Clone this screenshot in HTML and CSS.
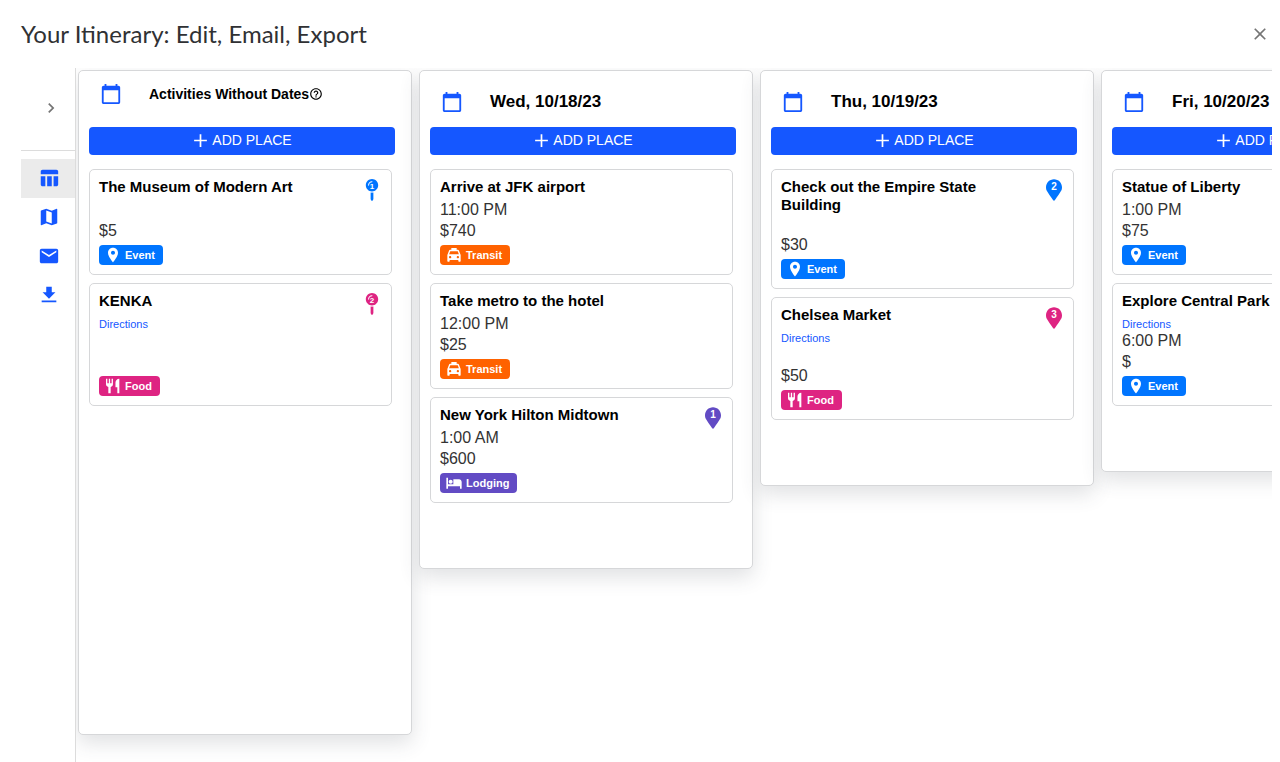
FILE: index.html
```html
<!DOCTYPE html>
<html lang="en">
<head>
<meta charset="utf-8">
<title>Your Itinerary</title>
<link rel="stylesheet" href="styles.css">
</head>
<body>
<svg class="sprite" aria-hidden="true">
  <symbol id="calendar" viewBox="0 0 24 24"><path d="M20 3h-1V1h-2v2H7V1H5v2H4c-1.1 0-2 .9-2 2v16c0 1.1.9 2 2 2h16c1.1 0 2-.9 2-2V5c0-1.1-.9-2-2-2zm0 18H4V8h16v13z"/></symbol>
  <symbol id="plus" viewBox="0 0 24 24"><path d="M21 13.200h-7.800V21h-2.400v-7.800H3v-2.400h7.800V3h2.400v7.800H21z"/></symbol>
  <symbol id="place" viewBox="0 0 24 24"><path d="M12 1C7.600 1 4.500 4.300 4.500 8.500 4.500 14.500 12 23 12 23s7.500-8.500 7.500-14.500C19.500 4.300 16.400 1 12 1zm0 10.500c-1.700 0-3-1.300-3-3s1.300-3 3-3 3 1.300 3 3-1.300 3-3 3z"/></symbol>
  <symbol id="taxi" viewBox="0 0 24 24"><path d="M19.500 5.500C19.200 4.600 18.600 4 17.800 4H16V1.500H8V4H6.200c-.8 0-1.400.6-1.700 1.500L2 12v9c0 .6.400 1 1 1h1.500c.6 0 1-.4 1-1v-1.500h13V21c0 .6.400 1 1 1H21c.6 0 1-.4 1-1v-9zM6.200 17c-.9 0-1.700-.8-1.700-1.700s.8-1.700 1.700-1.700 1.700.8 1.700 1.700S7.100 17 6.200 17zm11.600 0c-.9 0-1.700-.8-1.700-1.700s.8-1.700 1.700-1.700 1.700.8 1.700 1.700-.8 1.700-1.700 1.700zM4.700 11l1.700-4.800h11.200l1.700 4.800z"/></symbol>
  <symbol id="food" viewBox="0 0 24 24"><path d="M1.500 1h2v7h2.200V1h2v7h2.200V1h2v8.500c0 2.300-1.400 3.600-3.400 4V23H5v-9.500c-2-.4-3.500-1.700-3.500-4zM21.500 1v22h-3v-9h-2.800V7c0-3.500 2.300-6 5.800-6z"/></symbol>
  <symbol id="bed" viewBox="0 0 24 24"><path d="M7 13c1.660 0 3-1.340 3-3S8.660 7 7 7s-3 1.340-3 3 1.340 3 3 3zm12.500-6.500H11V14H3V4H.5v16.500H3V17h18v3.500h2.500V10.500c0-2.200-1.800-4-4-4z"/></symbol>
  <symbol id="marker" viewBox="0 0 384 512"><path d="M172.270 501.670C26.970 291.030 0 269.410 0 192 0 85.960 85.960 0 192 0s192 85.960 192 192c0 77.410-26.970 99.030-172.270 309.670-9.530 13.770-29.930 13.770-39.460 0z"/></symbol>
  <symbol id="map-pin" viewBox="0 0 288 512"><path d="M112 316.940v156.690l22.020 33.020c4.750 7.120 15.220 7.120 19.970 0L176 473.630V316.940c-10.390 1.920-21.060 3.060-32 3.060s-21.610-1.140-32-3.060zM144 0C64.470 0 0 64.470 0 144s64.470 144 144 144 144-64.470 144-144S223.530 0 144 0zm0 76c-37.500 0-68 30.500-68 68 0 6.620-5.380 12-12 12s-12-5.380-12-12c0-50.730 41.280-92 92-92 6.620 0 12 5.380 12 12s-5.380 12-12 12z"/></symbol>
</svg>

<header class="page-header">
  <h1>Your Itinerary: Edit, Email, Export</h1>
  <button class="icon-button" aria-label="Close"><svg viewBox="0 0 24 24" width="20" height="20"><path d="M19 6.410L17.590 5 12 10.590 6.410 5 5 6.410 10.590 12 5 17.590 6.410 19 12 13.410 17.590 19 19 17.590 13.410 12z"/></svg></button>
</header>

<div class="workspace">
  <nav class="sidebar" aria-label="Views">
    <div class="sidebar-top">
      <button class="icon-button" aria-label="Expand menu"><svg viewBox="0 0 24 24" width="20" height="20"><path d="M10 6L8.590 7.410 13.170 12l-4.580 4.590L10 18l6-6z"/></svg></button>
    </div>
    <div class="views">
      <button class="view selected" aria-label="Board"><svg viewBox="0 0 24 24"><path d="M10 10.020h5V21h-5zM17 21h3c1.100 0 2-.9 2-2v-9h-5v11zm3-18H5c-1.100 0-2 .9-2 2v3h19V5c0-1.100-.9-2-2-2zM3 19c0 1.100.9 2 2 2h3V10H3v9z"/></svg></button>
      <button class="view" aria-label="Map"><svg viewBox="0 0 24 24"><path d="M20.500 3l-.16.03L15 5.100 9 3 3.360 4.900c-.21.07-.36.25-.36.48V20.500c0 .28.22.5.5.5l.16-.03L9 18.900l6 2.100 5.640-1.900c.21-.07.36-.25.36-.48V3.500c0-.28-.22-.5-.5-.5zM15 19l-6-2.110V5l6 2.110V19z"/></svg></button>
      <button class="view" aria-label="Email"><svg viewBox="0 0 24 24"><path d="M20 4H4c-1.100 0-1.990.9-1.990 2L2 18c0 1.100.9 2 2 2h16c1.100 0 2-.9 2-2V6c0-1.100-.9-2-2-2zm0 4l-8 5-8-5V6l8 5 8-5v2z"/></svg></button>
      <button class="view" aria-label="Download"><svg viewBox="0 0 24 24"><path d="M19 9h-4V3H9v6H5l7 7 7-7zM4 18v2h16v-2H4z"/></svg></button>
    </div>
  </nav>

  <main class="board">
    <section class="column undated">
      <div class="column-header">
        <svg class="calendar"><use href="#calendar"/></svg>
        <h2>Activities Without Dates</h2>
        <svg class="help" viewBox="0 0 24 24"><path d="M11 18h2v-2h-2v2zm1-16C6.480 2 2 6.480 2 12s4.480 10 10 10 10-4.480 10-10S17.520 2 12 2zm0 18c-4.410 0-8-3.590-8-8s3.590-8 8-8 8 3.590 8 8-3.590 8-8 8zm0-14c-2.210 0-4 1.790-4 4h2c0-1.100.9-2 2-2s2 .9 2 2c0 2-3 1.750-3 5h2c0-2.250 3-2.500 3-5 0-2.210-1.790-4-4-4z"/></svg>
      </div>
      <button class="add"><svg><use href="#plus"/></svg>ADD PLACE</button>
      <div class="cards">
        <article class="card">
          <div class="card-body">
            <h3>The Museum of Modern Art</h3>
            <p></p>
            <p>$5</p>
            <span class="badge event"><svg><use href="#place"/></svg>Event</span>
          </div>
          <span class="pin thin event"><svg><use href="#map-pin"/></svg><b>1</b></span>
        </article>
        <article class="card">
          <div class="card-body">
            <h3>KENKA</h3>
            <a href="#">Directions</a>
            <p></p>
            <p></p>
            <span class="badge food"><svg><use href="#food"/></svg>Food</span>
          </div>
          <span class="pin thin food"><svg><use href="#map-pin"/></svg><b>2</b></span>
        </article>
      </div>
    </section>

    <section class="column">
      <div class="column-header">
        <svg class="calendar"><use href="#calendar"/></svg>
        <h2>Wed, 10/18/23</h2>
      </div>
      <button class="add"><svg><use href="#plus"/></svg>ADD PLACE</button>
      <div class="cards">
        <article class="card">
          <div class="card-body">
            <h3>Arrive at JFK airport</h3>
            <p>11:00 PM</p>
            <p>$740</p>
            <span class="badge transit"><svg><use href="#taxi"/></svg>Transit</span>
          </div>
        </article>
        <article class="card">
          <div class="card-body">
            <h3>Take metro to the hotel</h3>
            <p>12:00 PM</p>
            <p>$25</p>
            <span class="badge transit"><svg><use href="#taxi"/></svg>Transit</span>
          </div>
        </article>
        <article class="card">
          <div class="card-body">
            <h3>New York Hilton Midtown</h3>
            <p>1:00 AM</p>
            <p>$600</p>
            <span class="badge lodging"><svg><use href="#bed"/></svg>Lodging</span>
          </div>
          <span class="pin lodging"><svg><use href="#marker"/></svg><b>1</b></span>
        </article>
      </div>
    </section>

    <section class="column">
      <div class="column-header">
        <svg class="calendar"><use href="#calendar"/></svg>
        <h2>Thu, 10/19/23</h2>
      </div>
      <button class="add"><svg><use href="#plus"/></svg>ADD PLACE</button>
      <div class="cards">
        <article class="card">
          <div class="card-body">
            <h3>Check out the Empire State Building</h3>
            <p></p>
            <p>$30</p>
            <span class="badge event"><svg><use href="#place"/></svg>Event</span>
          </div>
          <span class="pin event"><svg><use href="#marker"/></svg><b>2</b></span>
        </article>
        <article class="card">
          <div class="card-body">
            <h3>Chelsea Market</h3>
            <a href="#">Directions</a>
            <p></p>
            <p>$50</p>
            <span class="badge food"><svg><use href="#food"/></svg>Food</span>
          </div>
          <span class="pin food"><svg><use href="#marker"/></svg><b>3</b></span>
        </article>
      </div>
    </section>

    <section class="column">
      <div class="column-header">
        <svg class="calendar"><use href="#calendar"/></svg>
        <h2>Fri, 10/20/23</h2>
      </div>
      <button class="add"><svg><use href="#plus"/></svg>ADD PLACE</button>
      <div class="cards">
        <article class="card">
          <div class="card-body">
            <h3>Statue of Liberty</h3>
            <p>1:00 PM</p>
            <p>$75</p>
            <span class="badge event"><svg><use href="#place"/></svg>Event</span>
          </div>
        </article>
        <article class="card">
          <div class="card-body">
            <h3>Explore Central Park</h3>
            <a href="#">Directions</a>
            <p>6:00 PM</p>
            <p>$</p>
            <span class="badge event"><svg><use href="#place"/></svg>Event</span>
          </div>
        </article>
      </div>
    </section>
  </main>
</div>
</body>
</html>
```
FILE: styles.css
```css
* { box-sizing: border-box; }

body {
  margin: 0;
  height: 100vh;
  padding: 0 8px 0 21px;
  display: flex;
  flex-direction: column;
  overflow: hidden;
  background: #fff;
  color: #000;
  font-family: "Liberation Sans", Arial, sans-serif;
}

h1, h2, h3, p { margin: 0; }
button { font: inherit; border: 0; padding: 0; cursor: pointer; }
svg { fill: currentColor; flex: none; }
.sprite { display: none; }

.page-header {
  flex: none;
  height: 68px;
  padding-right: 2px;
  display: flex;
  align-items: center;
  justify-content: space-between;
}
h1 {
  font: 400 24px/32px Lato, sans-serif;
  color: #303134;
}
.icon-button {
  display: flex;
  background: none;
  color: #757575;
}

.workspace {
  flex: 1;
  min-height: 0;
  display: flex;
}

.sidebar {
  flex: none;
  width: 55px;
  border-right: 1px solid #dcdcdc;
}
.sidebar-top {
  height: 83px;
  padding: 0 0 2px 6px;
  display: flex;
  align-items: center;
  justify-content: center;
  border-bottom: 1px solid #dcdcdc;
}
.views {
  padding-top: 8px;
  display: flex;
  flex-direction: column;
}
.view {
  height: 39px;
  padding: 0 0 2px 2px;
  display: flex;
  align-items: center;
  justify-content: center;
  background: none;
  color: #1557ff;
}
.view.selected { background: #ebebeb; }
.view svg { width: 22px; height: 22px; }

.board {
  flex: 1;
  min-width: 0;
  padding: 2px 0 27px 2px;
  display: flex;
  align-items: flex-start;
  gap: 7px;
  overflow: hidden;
}
.column {
  flex: none;
  width: 334px;
  padding: 0 16px 65px 10px;
  border: 1px solid #d6d7d9;
  border-radius: 5px;
  background: #fff;
  box-shadow: 0 8px 20px rgba(60, 66, 82, 0.16);
}
.undated { align-self: stretch; }

.column-header {
  height: 56px;
  padding: 6px 0 0 11px;
  display: flex;
  align-items: center;
}
.undated .column-header { padding-bottom: 16px; }
.calendar {
  width: 22px;
  height: 22px;
  margin-right: 27px;
  color: #1557ff;
}
h2 { font-size: 17px; line-height: 24px; }
.undated h2 { font-size: 14px; }
.help { width: 14px; height: 14px; }

.add {
  width: 100%;
  height: 28px;
  padding-bottom: 2px;
  display: flex;
  align-items: center;
  justify-content: center;
  gap: 3px;
  border-radius: 4px;
  background: #1557ff;
  color: #fff;
  font-size: 14px;
}
.add svg { width: 17px; height: 17px; }

.cards {
  padding: 14px 3px 0 0;
  display: flex;
  flex-direction: column;
  gap: 8px;
}
.card {
  padding: 8px 11px 9px 9px;
  display: flex;
  justify-content: space-between;
  border: 1px solid #d6d7d9;
  border-radius: 5px;
}
.card-body {
  width: 220px;
  display: flex;
  flex-direction: column;
  align-items: flex-start;
}
h3 {
  min-height: 22px;
  font-size: 15px;
  line-height: 18px;
}
.card p {
  height: 20px;
  margin-bottom: 1px;
  font-size: 16px;
  line-height: 20px;
  color: #333;
}
.card a {
  height: 17px;
  font-size: 11px;
  line-height: 20px;
  color: #1557ff;
  text-decoration: none;
}

.badge {
  height: 20px;
  margin-top: 3px;
  padding: 0 8px 0 6px;
  display: flex;
  align-items: center;
  gap: 4px;
  border-radius: 4px;
  color: #fff;
  font-size: 11px;
  font-weight: 700;
}
.badge svg { width: 16px; height: 16px; }
.badge.event { background: #0075ff; }
.badge.food { background: #de2482; }
.badge.transit { background: #ff6200; }
.badge.lodging { background: #624bc4; }

.pin {
  display: grid;
  align-self: flex-start;
  justify-items: center;
  padding-top: 1px;
}
.pin svg, .pin b { grid-area: 1 / 1; }
.pin svg { width: 16px; height: 22px; }
.pin b {
  color: #fff;
  font-size: 10px;
  line-height: 16px;
}
.pin.thin b { font-size: 8px; }
.pin.event { color: #0075ff; }
.pin.food { color: #de2482; }
.pin.lodging { color: #624bc4; }
```
